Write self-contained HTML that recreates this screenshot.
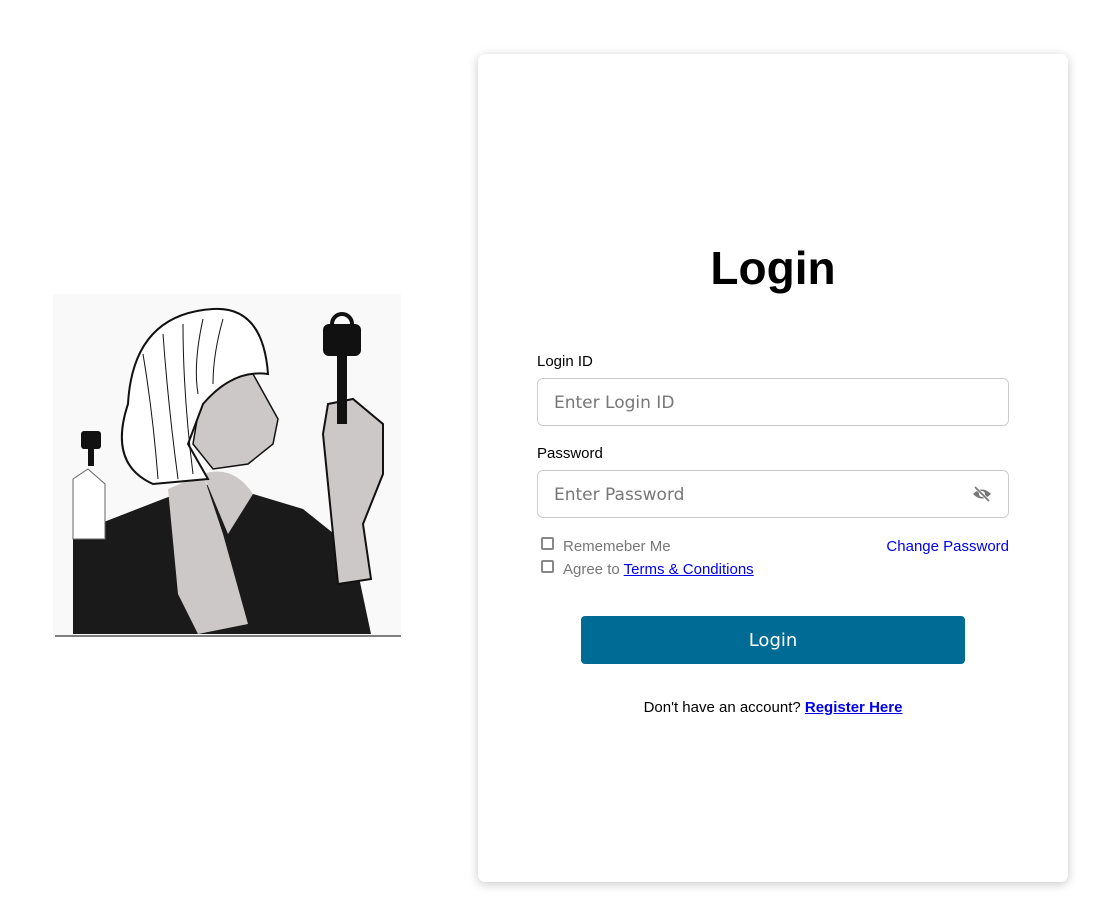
<!DOCTYPE html>
<html><head><style>
*{box-sizing:border-box;margin:0;padding:0}
body{width:1109px;height:920px;background:#fff;font-family:"Liberation Sans",sans-serif;position:relative;overflow:hidden}
.card{position:absolute;left:478px;top:54px;width:590px;height:828px;background:#fff;border-radius:7px;box-shadow:0 2px 10px rgba(0,0,0,.22)}
.abs{position:absolute}
h1{position:absolute;left:0;width:590px;top:187px;text-align:center;font-size:46px;font-weight:bold;color:#000}
.lbl{font-size:15px;color:#000}
.inp{position:absolute;left:59px;width:472px;height:48px;border:1px solid #ccc;border-radius:6px;color:#777;padding:13px 16px;font-family:"DejaVu Sans","Liberation Sans",sans-serif;font-size:17px}
.cb{position:absolute;width:13px;height:13px;border:2px solid #888;border-radius:2px}
.sm{font-size:15px;color:#777}
a{color:#0000ee}
.btn{position:absolute;left:103px;top:562px;width:384px;height:48px;background:#006b94;border-radius:4px;color:#fff;text-align:center;line-height:50px;font-size:18px;font-family:"DejaVu Sans",sans-serif}
</style></head><body>
<svg class="abs" style="left:53px;top:294px" width="348" height="344" viewBox="0 0 348 344">
<rect width="348" height="342" fill="#f9f9f9"/>
<path d="M20 240 L110 205 L150 190 L200 200 L250 215 L300 255 L318 340 L20 340Z" fill="#1a1a1a"/>
<path d="M115 195 L150 180 L170 240 L195 330 L145 340 L125 300Z" fill="#cdc8c8"/>
<path d="M150 180 Q180 170 200 200 L175 240Z" fill="#cdc8c8"/>
<path d="M270 140 L275 110 L300 105 L330 130 L330 180 L310 230 L318 285 L285 290 L280 240Z" fill="#cdc8c8" stroke="#111" stroke-width="2"/>
<path d="M150 90 Q170 70 200 80 L225 125 L220 150 L195 170 L160 175 L140 150Z" fill="#cdc8c8" stroke="#111" stroke-width="1.5"/>
<path d="M75 110 Q80 20 160 15 Q210 12 215 80 Q180 75 150 110 L135 150 L155 185 L100 190 Q55 170 75 110Z" fill="#fff" stroke="#111" stroke-width="2"/>
<g stroke="#111" stroke-width="1" fill="none"><path d="M90 60 Q100 120 105 185"/><path d="M110 40 Q115 110 125 185"/><path d="M130 30 Q130 100 140 180"/><path d="M150 25 Q140 70 145 100"/><path d="M170 25 Q160 60 160 90"/></g>
<rect x="270" y="30" width="38" height="32" rx="6" fill="#111"/><circle cx="289" cy="30" r="10" fill="none" stroke="#111" stroke-width="4"/>
<rect x="284" y="60" width="10" height="70" fill="#111"/>
<rect x="28" y="137" width="20" height="18" rx="3" fill="#111"/><rect x="35" y="150" width="6" height="22" fill="#111"/>
<path d="M20 185 L35 175 L52 190 L52 245 L20 245Z" fill="#fff" stroke="#666"/>
<line x1="2" y1="342" x2="348" y2="342" stroke="#555" stroke-width="1.5"/>
</svg>
<div class="card">
<h1>Login</h1>
<div class="abs lbl" style="left:59px;top:299px">Login ID</div>
<div class="inp" style="top:324px;padding-top:14px">Enter Login ID</div>
<div class="abs lbl" style="left:59px;top:391px">Password</div>
<div class="inp" style="top:416px;padding-top:14px">Enter Password</div>
<svg class="abs" style="left:494px;top:431px" width="20" height="18" viewBox="0 0 20 18"><path d="M1 9 Q10 0 19 9 Q10 18 1 9Z" fill="#777"/><circle cx="10" cy="9" r="3" fill="#fff"/><line x1="3" y1="2" x2="17" y2="16" stroke="#fff" stroke-width="3"/><line x1="3" y1="2" x2="17" y2="16" stroke="#777" stroke-width="1.6"/></svg>
<div class="cb" style="left:63px;top:483px"></div>
<div class="abs sm" style="left:85px;top:484px">Rememeber Me</div>
<div class="cb" style="left:63px;top:506px"></div>
<div class="abs sm" style="left:85px;top:507px">Agree to <a href="#">Terms &amp; Conditions</a></div>
<div class="abs" style="right:59px;top:484px;font-size:15px;color:#0000ee">Change Password</div>
<div class="btn">Login</div>
<div class="abs" style="left:0;width:590px;text-align:center;top:645px;font-size:15px">Don't have an account? <a href="#" style="font-weight:bold">Register Here</a></div>
</div>
</body></html>
